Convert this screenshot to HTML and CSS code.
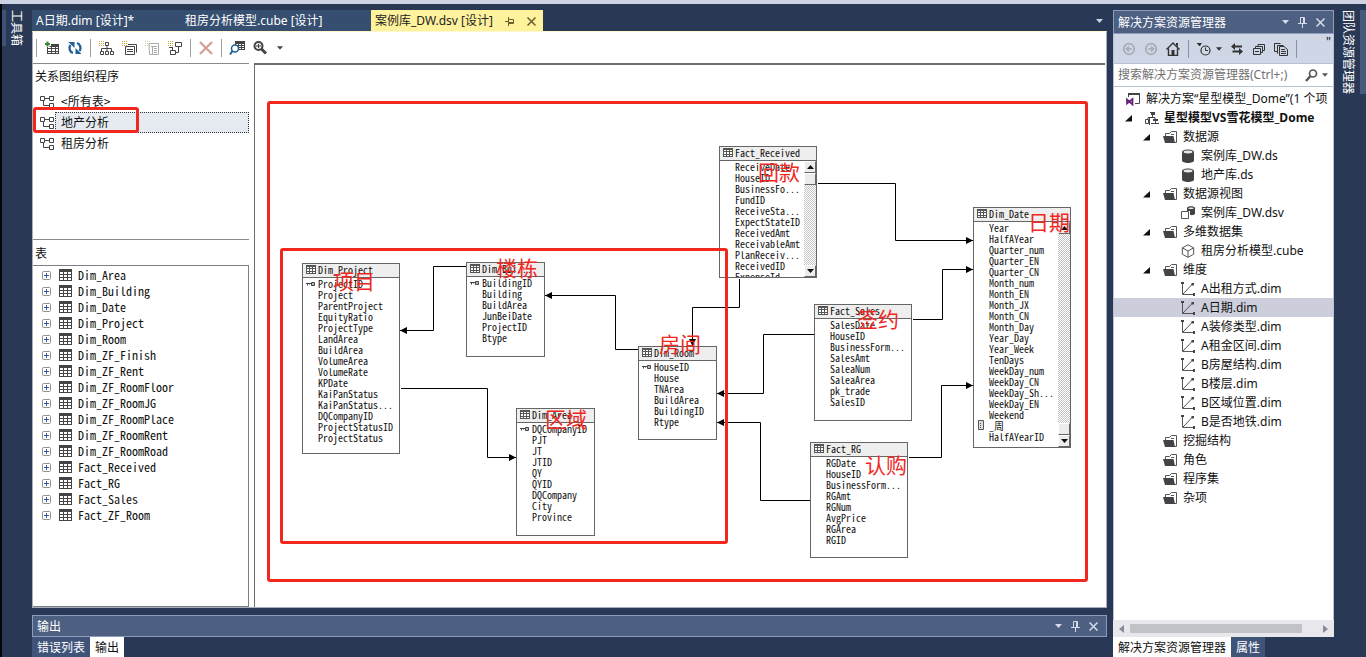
FILE: index.html
```html
<!DOCTYPE html>
<html lang="zh-CN">
<head>
<meta charset="utf-8">
<title>案例库_DW.dsv [设计]</title>
<link rel="stylesheet" href="styles.css">
</head>
<body>
<svg class="sprite" aria-hidden="true">
  <symbol id="i-table" viewBox="0 0 13 12"><path fill="#444" d="M0 0h13v12H0z"/><path fill="#fff" d="M1 3h3v2H1zM5 3h3v2H5zM9 3h3v2H9zM1 6h3v2H1zM5 6h3v2H5zM9 6h3v2H9zM1 9h3v2H1zM5 9h3v2H5zM9 9h3v2H9z"/></symbol>
  <symbol id="i-tablesm" viewBox="0 0 10 9"><path fill="#555" d="M0 0h10v9H0z"/><path fill="#fff" d="M1 2h2v1H1zM4 2h2v1H4zM7 2h2v1H7zM1 4h2v2H1zM4 4h2v2H4zM7 4h2v2H7zM1 7h2v1H1zM4 7h2v1H4zM7 7h2v1H7z"/></symbol>
  <symbol id="i-key" viewBox="0 0 9 6"><path fill="none" stroke="#444" d="M0 2.500h5M1.500 2.500v2M3.500 2.500v1"/><path fill="#bbb" stroke="#444" d="M5.500 1.500h3v3h-3z"/></symbol>
  <symbol id="i-calc" viewBox="0 0 6 10"><path fill="#ddd" stroke="#555" d="M.5.5h5v9h-5z"/><path stroke="#555" stroke-dasharray="1 1" d="M2 3.500h2M2 5.500h2M2 7.500h2"/></symbol>
  <symbol id="i-plus" viewBox="0 0 9 9"><rect x=".5" y=".5" width="8" height="8" rx="1" fill="#fff" stroke="#919191"/><path stroke="#3a56a5" d="M2 4.500h5M4.500 2v5"/></symbol>
  <symbol id="i-diagram" viewBox="0 0 15 13"><path fill="none" stroke="#444" d="M.5 1.500h4v4h-4zM9.500 1.500h4v4h-4zM9.500 8.500h4v4h-4zM4.500 3.500h5M3.500 5.500v5h6"/></symbol>
  <symbol id="i-down" viewBox="0 0 7 4"><path fill="currentColor" d="M0 0h7L3.500 4z"/></symbol>
  <symbol id="i-pin" viewBox="0 0 9 11"><path fill="none" stroke="currentColor" d="M2.500 6V.5h4V6M5.500 1v5M0 6.500h9M4.500 7v4"/></symbol>
  <symbol id="i-pinside" viewBox="0 0 10 9"><path fill="none" stroke="currentColor" d="M4 2.500h4.500v4H4M4 5.500h4M3.500 0v9M0 4.500h3"/></symbol>
  <symbol id="i-close" viewBox="0 0 9 9"><path fill="none" stroke="currentColor" stroke-width="1.500" d="M.5.5l8 8M8.500.5l-8 8"/></symbol>
  <symbol id="i-folder" viewBox="0 0 14 14"><path fill="#fff" stroke="#555" d="M2.500 6V3.500h4l2-2h5v11H11"/><path stroke="#555" d="M8 4.500h3"/><path fill="#444" d="M0 6h10.500L12 13H2z"/></symbol>
  <symbol id="i-db" viewBox="0 0 14 14"><path fill="#424242" d="M1 3c0-3.500 12-3.500 12 0v8.500c0 3.300-12 3.300-12 0z"/><ellipse cx="7" cy="3" rx="4.500" ry="1.400" fill="#e8e8e8"/></symbol>
  <symbol id="i-dsv" viewBox="0 0 14 14"><path fill="none" stroke="#555" d="M.5 5.500h7v7h-7z"/><path fill="#424242" d="M6 2c0-2.500 8-2.500 8 0v5.500c0 2-5 2-5 1V5H6z"/><ellipse cx="10" cy="2.300" rx="2.800" ry=".8" fill="#fff"/></symbol>
  <symbol id="i-cube" viewBox="0 0 14 14"><path fill="none" stroke="#555" d="M7 .8l5.700 3v6.400L7 13.300l-5.700-3.100V3.800zM1.300 3.800L7 7l5.700-3.200M7 7v6.300"/></symbol>
  <symbol id="i-dim" viewBox="0 0 14 14"><path fill="none" stroke="#555" d="M1.500 1v11.500H12M2 12L11.500 2"/><path fill="#444" d="M0 0h3v2H0zM10.500 1h2.500v2.500h-2.500zM12 11h2v3h-2z"/></symbol>
  <symbol id="i-project" viewBox="0 0 14 14"><path fill="none" stroke="#444" d="M5 1.500h5M7.500 2v4M3 8V6.500h7V8M.5 8.500h3v4h-3zM4.500 7v7M6 12.500h8M10.500 8v5"/><path fill="#444" d="M6 1h4v3H6zM8 8h5v2H8z"/></symbol>
  <symbol id="i-solution" viewBox="0 0 14 14"><path fill="none" stroke="#444" d="M2.500 5V1.500h11v10H9"/><path fill="#444" d="M2 1h12v2H2z"/><path fill="none" stroke="#68217a" stroke-width="1.700" d="M1 7.500v4l5.500-4.500v5.500z"/></symbol>
  <symbol id="i-twisty" viewBox="0 0 7 7"><path fill="#111" d="M7 0v6.500H0z"/></symbol>
  <symbol id="i-addtable" viewBox="0 0 16 16"><path fill="#444" d="M3 4h12v10H3z"/><path fill="#fff" d="M4 7h3v1H4zM8 7h3v1H8zM12 7h2v1h-2zM4 9h3v2H4zM8 9h3v2H8zM12 9h2v2h-2zM4 12h3v1H4zM8 12h3v1H8zM12 12h2v1h-2z"/><path stroke="#fff" stroke-width="4" d="M0 4h7M3.500 1v6"/><path stroke="#388a34" stroke-width="2" d="M1 4h5M3.500 1.500v5"/></symbol>
  <symbol id="i-refresh" viewBox="0 0 16 16"><path fill="none" stroke="#1f6096" stroke-width="2.300" d="M6 13A5.200 5.200 0 0 1 3.500 5M10 3a5.200 5.200 0 0 1 2.500 8"/><path fill="#1f6096" d="M1.500 2h6v6zM14.500 14h-6V8z"/></symbol>
  <symbol id="i-tree" viewBox="0 0 16 16"><path stroke="#c9a03c" stroke-dasharray="1 1" d="M1 1.500h5M1 3.500h5M1 5.500h5"/><path fill="none" stroke="#444" d="M7.500 2.500h3v3h-3zM9 6v3M3.500 11V8.500h10V11M2.500 11.500h3v3h-3zM7.500 11.500h3v3h-3zM12.500 11.500h3v3h-3zM9 9v2"/></symbol>
  <symbol id="i-calcnew" viewBox="0 0 16 16"><path stroke="#c9a03c" stroke-dasharray="1 1" d="M1 1.500h5M1 3.500h5M1 5.500h5"/><path fill="none" stroke="#444" d="M7 4.500h8.500v8M4.500 6.500h9v8h-9zM6 9.500h6M6 11.500h6"/></symbol>
  <symbol id="i-copyoff" viewBox="0 0 16 16"><path stroke="#d8cba8" stroke-dasharray="1 1" d="M1 1.500h5M1 3.500h5M1 5.500h5"/><path fill="none" stroke="#aaa" d="M5 3.500h9.500v11h-9zM8.500 6v8M7 6.500h6M10 8.500h3M10 10.500h3M10 12.500h3"/></symbol>
  <symbol id="i-relnew" viewBox="0 0 16 16"><path stroke="#c9a03c" stroke-dasharray="1 1" d="M1 1.500h5M1 3.500h5M1 5.500h5"/><path fill="none" stroke="#444" d="M8.500 2.500h6v4h-6zM3.500 10.500h5v4h-5zM5.500 10V8M8.500 12.500h3V7M2 7.500h4"/></symbol>
  <symbol id="i-delete" viewBox="0 0 16 16"><path stroke="#d2a29a" stroke-width="2.400" d="M2 2l12 12M14 2L2 14"/></symbol>
  <symbol id="i-findtable" viewBox="0 0 16 16"><path fill="#444" d="M6 1h10v9H6z"/><path fill="#fff" d="M7 4h2v1H7zM10 4h2v1h-2zM13 4h2v1h-2zM7 6h2v1H7zM10 6h2v1h-2zM13 6h2v1h-2zM10 8h2v1h-2zM13 8h2v1h-2z"/><circle cx="6" cy="8.500" r="3.500" fill="#fff" stroke="#1f6096" stroke-width="1.500"/><path stroke="#1f6096" stroke-width="2" d="M3.500 11L1 14.500"/></symbol>
  <symbol id="i-zoom" viewBox="0 0 16 16"><circle cx="6.500" cy="6" r="4" fill="#eee" stroke="#444" stroke-width="2"/><path stroke="#444" d="M4 6h5M6.500 4v4"/><path stroke="#444" stroke-width="3" d="M9.500 9l4.500 4.500"/></symbol>
  <symbol id="i-back" viewBox="0 0 14 14"><circle cx="7" cy="7" r="5.300" fill="none" stroke="#a6aab3" stroke-width="1.700"/><path fill="none" stroke="#a6aab3" stroke-width="1.500" d="M10 7H4.500M7 4.500L4.500 7 7 9.500"/></symbol>
  <symbol id="i-forward" viewBox="0 0 14 14"><circle cx="7" cy="7" r="5.300" fill="none" stroke="#a6aab3" stroke-width="1.700"/><path fill="none" stroke="#a6aab3" stroke-width="1.500" d="M4 7h5.500M7 4.500L9.500 7 7 9.500"/></symbol>
  <symbol id="i-home" viewBox="0 0 14 14"><path fill="none" stroke="#333" stroke-width="1.400" d="M.5 7.500L7 1l6.500 6.500M2.500 6.500v7h9v-7"/><path fill="#333" d="M5.500 8h3v5.500h-3zM10 1h2v4l-2-2z"/></symbol>
  <symbol id="i-clock" viewBox="0 0 14 14"><circle cx="8.500" cy="8.500" r="4.500" fill="none" stroke="#333" stroke-width="1.200"/><path fill="none" stroke="#333" d="M8.500 5.500v3h2.500M0 1.500h4"/><path fill="#333" d="M0 1h5L3 4H2z"/></symbol>
  <symbol id="i-sync" viewBox="0 0 14 14"><path fill="none" stroke="#333" stroke-width="1.800" d="M3 4.500h9M11 9.500H2.500"/><path fill="#333" d="M5 1v7L1 4.500zM9 6v7l4-3.500z"/></symbol>
  <symbol id="i-collapse" viewBox="0 0 14 14"><path fill="none" stroke="#333" d="M1.500 6.500h7v6h-7zM3 9.500h4M3.500 6V4.500h7v6H9M6 4V2.500h6.500v6H11"/></symbol>
  <symbol id="i-showall" viewBox="0 0 14 14"><path fill="none" stroke="#333" d="M3 9.500H.5v-8h6M4 11.500H3.500v-8h6M5.500 4.500H10l3.500 3v6h-8zM7 7.500h4M7 9.500h5M7 11.500h5"/></symbol>
  <symbol id="i-search" viewBox="0 0 13 13"><circle cx="8" cy="4.500" r="3.500" fill="none" stroke="#555" stroke-width="1.700"/><path stroke="#555" stroke-width="2.400" d="M5.500 7L1 12"/></symbol>
  <symbol id="i-left" viewBox="0 0 5 8"><path fill="#868999" d="M5 0v8L0 4z"/></symbol>
  <symbol id="i-right" viewBox="0 0 5 8"><path fill="#868999" d="M0 0v8l5-4z"/></symbol>
</svg>

<div class="app">
  <div class="topstrip"></div>
  <div class="shell">
    <aside class="rail rail-left"><button class="rail-tab">工具箱</button></aside>

    <main class="center">
      <nav class="tabs">
        <button class="tab tab-a">A日期.dim [设计]*</button>
        <button class="tab tab-b">租房分析模型.cube [设计]</button>
        <div class="tab active"><span>案例库_DW.dsv [设计]</span>
          <button class="icon-btn" aria-label="固定"><svg width="10" height="9"><use href="#i-pinside"/></svg></button>
          <button class="icon-btn" aria-label="关闭"><svg width="9" height="9"><use href="#i-close"/></svg></button></div>
        <button class="icon-btn tabs-more" aria-label="更多"><svg width="7" height="4"><use href="#i-down"/></svg></button>
      </nav>

      <section class="editor">
        <div class="toolbar">
          <i class="sep"></i>
          <button class="tool" aria-label="添加表"><svg><use href="#i-addtable"/></svg></button>
          <button class="tool" aria-label="刷新"><svg><use href="#i-refresh"/></svg></button>
          <i class="sep"></i>
          <button class="tool" aria-label="新建关系图"><svg><use href="#i-tree"/></svg></button>
          <button class="tool" aria-label="新建命名查询"><svg><use href="#i-calcnew"/></svg></button>
          <button class="tool" aria-label="新建命名计算"><svg><use href="#i-copyoff"/></svg></button>
          <button class="tool" aria-label="新建关系"><svg><use href="#i-relnew"/></svg></button>
          <i class="sep"></i>
          <button class="tool" aria-label="删除"><svg><use href="#i-delete"/></svg></button>
          <i class="sep"></i>
          <button class="tool" aria-label="查找表"><svg><use href="#i-findtable"/></svg></button>
          <button class="tool" aria-label="缩放"><svg><use href="#i-zoom"/></svg></button>
          <button class="tool tool-arrow" aria-label="缩放选项"><svg><use href="#i-down"/></svg></button>
        </div>

        <div class="panes">
          <div class="sidepane">
            <section class="organizer">
              <h2>关系图组织程序</h2>
              <ul>
                <li><svg><use href="#i-diagram"/></svg><span>&lt;所有表&gt;</span></li>
                <li class="picked"><svg><use href="#i-diagram"/></svg><span>地产分析</span><i class="mark"></i></li>
                <li><svg><use href="#i-diagram"/></svg><span>租房分析</span></li>
              </ul>
            </section>
            <section class="tables">
              <h2>表</h2>
              <ul>
                <li><svg class="px"><use href="#i-plus"/></svg><svg class="tb"><use href="#i-table"/></svg>Dim_Area</li>
                <li><svg class="px"><use href="#i-plus"/></svg><svg class="tb"><use href="#i-table"/></svg>Dim_Building</li>
                <li><svg class="px"><use href="#i-plus"/></svg><svg class="tb"><use href="#i-table"/></svg>Dim_Date</li>
                <li><svg class="px"><use href="#i-plus"/></svg><svg class="tb"><use href="#i-table"/></svg>Dim_Project</li>
                <li><svg class="px"><use href="#i-plus"/></svg><svg class="tb"><use href="#i-table"/></svg>Dim_Room</li>
                <li><svg class="px"><use href="#i-plus"/></svg><svg class="tb"><use href="#i-table"/></svg>Dim_ZF_Finish</li>
                <li><svg class="px"><use href="#i-plus"/></svg><svg class="tb"><use href="#i-table"/></svg>Dim_ZF_Rent</li>
                <li><svg class="px"><use href="#i-plus"/></svg><svg class="tb"><use href="#i-table"/></svg>Dim_ZF_RoomFloor</li>
                <li><svg class="px"><use href="#i-plus"/></svg><svg class="tb"><use href="#i-table"/></svg>Dim_ZF_RoomJG</li>
                <li><svg class="px"><use href="#i-plus"/></svg><svg class="tb"><use href="#i-table"/></svg>Dim_ZF_RoomPlace</li>
                <li><svg class="px"><use href="#i-plus"/></svg><svg class="tb"><use href="#i-table"/></svg>Dim_ZF_RoomRent</li>
                <li><svg class="px"><use href="#i-plus"/></svg><svg class="tb"><use href="#i-table"/></svg>Dim_ZF_RoomRoad</li>
                <li><svg class="px"><use href="#i-plus"/></svg><svg class="tb"><use href="#i-table"/></svg>Fact_Received</li>
                <li><svg class="px"><use href="#i-plus"/></svg><svg class="tb"><use href="#i-table"/></svg>Fact_RG</li>
                <li><svg class="px"><use href="#i-plus"/></svg><svg class="tb"><use href="#i-table"/></svg>Fact_Sales</li>
                <li><svg class="px"><use href="#i-plus"/></svg><svg class="tb"><use href="#i-table"/></svg>Fact_ZF_Room</li>
              </ul>
            </section>
          </div>

          <div class="canvas">
            <svg class="links" aria-hidden="true">
              <defs><marker id="arrow" viewBox="0 0 6 6" refX="6" refY="3" markerWidth="7" markerHeight="7" markerUnits="userSpaceOnUse" orient="auto"><path d="M0 0l6 3-6 3z"/></marker></defs>
              <g transform="translate(-255 -65)" fill="none" stroke="#000">
                <path marker-end="url(#arrow)" d="M466 266.500H433.500V330.500H400"/>
                <path marker-end="url(#arrow)" d="M401 388.500H487.500V457.500H516"/>
                <path marker-end="url(#arrow)" d="M638 349.500H615.500V295.500H545"/>
                <path marker-end="url(#arrow)" d="M739.500 279V307.500H692.500V346"/>
                <path marker-end="url(#arrow)" d="M818 183.500H895.500V240.500H973"/>
                <path marker-end="url(#arrow)" d="M913 319.500H942.500V269.500H973"/>
                <path marker-end="url(#arrow)" d="M814 334.500H763.500V393.500H717"/>
                <path marker-end="url(#arrow)" d="M909 457.500H941.500V385.500H973"/>
                <path marker-end="url(#arrow)" d="M810 500.500H760.500V422.500H717"/>
              </g>
            </svg>

            <article class="node n-project"><h3><svg><use href="#i-tablesm"/></svg>Dim_Project</h3>
              <ul><li><svg class="key"><use href="#i-key"/></svg>ProjectID</li><li>Project</li><li>ParentProject</li><li>EquityRatio</li><li>ProjectType</li><li>LandArea</li><li>BuildArea</li><li>VolumeArea</li><li>VolumeRate</li><li>KPDate</li><li>KaiPanStatus</li><li>KaiPanStatus...</li><li>DQCompanyID</li><li>ProjectStatusID</li><li>ProjectStatus</li></ul></article>
            <article class="node n-building"><h3><svg><use href="#i-tablesm"/></svg>Dim_Bui...</h3>
              <ul><li><svg class="key"><use href="#i-key"/></svg>BuildingID</li><li>Building</li><li>BuildArea</li><li>JunBeiDate</li><li>ProjectID</li><li>Btype</li></ul></article>
            <article class="node n-area"><h3><svg><use href="#i-tablesm"/></svg>Dim_Area</h3>
              <ul><li><svg class="key"><use href="#i-key"/></svg>DQCompanyID</li><li>PJT</li><li>JT</li><li>JTID</li><li>QY</li><li>QYID</li><li>DQCompany</li><li>City</li><li>Province</li></ul></article>
            <article class="node n-room"><h3><svg><use href="#i-tablesm"/></svg>Dim_Room</h3>
              <ul><li><svg class="key"><use href="#i-key"/></svg>HouseID</li><li>House</li><li>TNArea</li><li>BuildArea</li><li>BuildingID</li><li>Rtype</li></ul></article>
            <article class="node n-received"><h3><svg><use href="#i-tablesm"/></svg>Fact_Received</h3>
              <div class="body"><ul><li>ReceiveDate</li><li>HouseID</li><li>BusinessFo...</li><li>FundID</li><li>ReceiveSta...</li><li>ExpectStateID</li><li>ReceivedAmt</li><li>ReceivableAmt</li><li>PlanReceiv...</li><li>ReceivedID</li><li>ExpenseId</li></ul>
                <div class="vbar"><button aria-label="向上"><svg class="flip"><use href="#i-down"/></svg></button><i class="thumb"></i><i class="track"></i><button aria-label="向下"><svg><use href="#i-down"/></svg></button></div></div></article>
            <article class="node n-sales"><h3><svg><use href="#i-tablesm"/></svg>Fact_Sales</h3>
              <ul><li>SalesDate</li><li>HouseID</li><li>BusinessForm...</li><li>SalesAmt</li><li>SaleaNum</li><li>SaleaArea</li><li>pk_trade</li><li>SalesID</li></ul></article>
            <article class="node n-rg"><h3><svg><use href="#i-tablesm"/></svg>Fact_RG</h3>
              <ul><li>RGDate</li><li>HouseID</li><li>BusinessForm...</li><li>RGAmt</li><li>RGNum</li><li>AvgPrice</li><li>RGArea</li><li>RGID</li></ul></article>
            <article class="node n-date"><h3><svg><use href="#i-tablesm"/></svg>Dim_Date</h3>
              <div class="body"><ul><li>Year</li><li>HalfAYear</li><li>Quarter_num</li><li>Quarter_EN</li><li>Quarter_CN</li><li>Month_num</li><li>Month_EN</li><li>Month_JX</li><li>Month_CN</li><li>Month_Day</li><li>Year_Day</li><li>Year_Week</li><li>TenDays</li><li>WeekDay_num</li><li>WeekDay_CN</li><li>WeekDay_Sh...</li><li>WeekDay_EN</li><li>Weekend</li><li><svg class="calc"><use href="#i-calc"/></svg>_周</li><li>HalfAYearID</li></ul>
                <div class="vbar"><button aria-label="向上"><svg class="flip"><use href="#i-down"/></svg></button><i class="track"></i><i class="thumb"></i><button aria-label="向下"><svg><use href="#i-down"/></svg></button></div></div></article>

            <i class="frame frame-outer"></i>
            <i class="frame frame-inner"></i>
            <b class="note t-project">项目</b>
            <b class="note t-building">楼栋</b>
            <b class="note t-room">房间</b>
            <b class="note t-area">区域</b>
            <b class="note t-received">回款</b>
            <b class="note t-sales">签约</b>
            <b class="note t-rg">认购</b>
            <b class="note t-date">日期</b>
          </div>
        </div>
      </section>

      <section class="output">
        <header class="titlebar"><span>输出</span>
          <button class="icon-btn" aria-label="选项"><svg width="7" height="4"><use href="#i-down"/></svg></button>
          <button class="icon-btn" aria-label="自动隐藏"><svg width="9" height="11"><use href="#i-pin"/></svg></button>
          <button class="icon-btn" aria-label="关闭"><svg width="9" height="9"><use href="#i-close"/></svg></button></header>
        <nav class="dock"><button>错误列表</button><button class="on">输出</button></nav>
      </section>
    </main>

    <aside class="explorer">
      <header class="titlebar"><span>解决方案资源管理器</span>
        <button class="icon-btn" aria-label="选项"><svg width="7" height="4"><use href="#i-down"/></svg></button>
        <button class="icon-btn" aria-label="自动隐藏"><svg width="9" height="11"><use href="#i-pin"/></svg></button>
        <button class="icon-btn" aria-label="关闭"><svg width="9" height="9"><use href="#i-close"/></svg></button></header>
      <div class="ex-tools">
        <button aria-label="后退"><svg><use href="#i-back"/></svg></button>
        <button aria-label="前进"><svg><use href="#i-forward"/></svg></button>
        <button aria-label="主页"><svg><use href="#i-home"/></svg></button>
        <i class="sep"></i>
        <button class="timed" aria-label="筛选"><svg><use href="#i-clock"/></svg><svg class="mini"><use href="#i-down"/></svg></button>
        <button aria-label="同步"><svg><use href="#i-sync"/></svg></button>
        <button aria-label="折叠"><svg><use href="#i-collapse"/></svg></button>
        <button aria-label="显示所有文件"><svg><use href="#i-showall"/></svg></button>
        <i class="sep"></i>
        <span class="overflow">"</span>
      </div>
      <label class="search"><input type="text" aria-label="搜索" placeholder="搜索解决方案资源管理器(Ctrl+;)"><svg width="13" height="13"><use href="#i-search"/></svg><svg width="6" height="4"><use href="#i-down"/></svg></label>
      <ul class="tree">
        <li><svg><use href="#i-solution"/></svg>解决方案“星型模型_Dome”(1 个项</li>
        <li class="l1"><svg class="tw"><use href="#i-twisty"/></svg><svg><use href="#i-project"/></svg><strong>星型模型VS雪花模型_Dome</strong></li>
        <li class="l2"><svg class="tw"><use href="#i-twisty"/></svg><svg><use href="#i-folder"/></svg>数据源</li>
        <li class="l3"><svg><use href="#i-db"/></svg>案例库_DW.ds</li>
        <li class="l3"><svg><use href="#i-db"/></svg>地产库.ds</li>
        <li class="l2"><svg class="tw"><use href="#i-twisty"/></svg><svg><use href="#i-folder"/></svg>数据源视图</li>
        <li class="l3"><svg><use href="#i-dsv"/></svg>案例库_DW.dsv</li>
        <li class="l2"><svg class="tw"><use href="#i-twisty"/></svg><svg><use href="#i-folder"/></svg>多维数据集</li>
        <li class="l3"><svg><use href="#i-cube"/></svg>租房分析模型.cube</li>
        <li class="l2"><svg class="tw"><use href="#i-twisty"/></svg><svg><use href="#i-folder"/></svg>维度</li>
        <li class="l3"><svg><use href="#i-dim"/></svg>A出租方式.dim</li>
        <li class="l3 sel"><svg><use href="#i-dim"/></svg>A日期.dim</li>
        <li class="l3"><svg><use href="#i-dim"/></svg>A装修类型.dim</li>
        <li class="l3"><svg><use href="#i-dim"/></svg>A租金区间.dim</li>
        <li class="l3"><svg><use href="#i-dim"/></svg>B房屋结构.dim</li>
        <li class="l3"><svg><use href="#i-dim"/></svg>B楼层.dim</li>
        <li class="l3"><svg><use href="#i-dim"/></svg>B区域位置.dim</li>
        <li class="l3"><svg><use href="#i-dim"/></svg>B是否地铁.dim</li>
        <li class="l2 leaf"><svg><use href="#i-folder"/></svg>挖掘结构</li>
        <li class="l2 leaf"><svg><use href="#i-folder"/></svg>角色</li>
        <li class="l2 leaf"><svg><use href="#i-folder"/></svg>程序集</li>
        <li class="l2 leaf"><svg><use href="#i-folder"/></svg>杂项</li>
      </ul>
      <div class="hbar"><svg width="5" height="8"><use href="#i-left"/></svg><i></i><svg width="5" height="8"><use href="#i-right"/></svg></div>
      <nav class="dock"><button class="on">解决方案资源管理器</button><button>属性</button></nav>
    </aside>

    <aside class="rail rail-right"><button class="rail-tab">团队资源管理器</button></aside>
  </div>
</div>
</body>
</html>
```
FILE: styles.css
```css
:root {
  --navy: #293955;
  --title: #4d6082;
  --edge: #8e9bbc;
  --red: #f0281e;
  --ui: "Noto Sans", "Noto Sans CJK SC", sans-serif;
  --mono: "Noto Sans Mono CJK SC", "Liberation Mono", "Noto Sans CJK SC", monospace;
}
* { box-sizing: border-box; }
body { margin: 0; background: var(--navy); font: 12px/16px var(--ui); color: #111; }
button { margin: 0; padding: 0; border: 0; background: none; color: inherit; font: inherit; white-space: nowrap; }
ul { list-style: none; margin: 0; padding: 0; }
h2, h3 { margin: 0; font-weight: 400; font-size: 12px; }
svg { display: block; flex: none; }
.sprite { position: absolute; width: 0; height: 0; }

.app { height: 100vh; display: flex; flex-direction: column; overflow: hidden; }
.topstrip { height: 4px; flex: none; background: #cdd3e3; }
.shell { flex: 1; min-height: 0; display: flex; }

.rail { flex: none; width: 32px; padding-top: 6px; color: #fff; }
.rail-left { border-left: 2px solid #05070d; }
.rail-left .rail-tab { border-left: 4px solid #3d5277; padding-left: 2px; }
.rail-right { display: flex; justify-content: flex-end; align-items: flex-start; }
.rail-right .rail-tab { border-right: 6px solid #465a7d; padding-right: 4px; }
.rail-tab { writing-mode: vertical-rl; text-orientation: sideways; line-height: 16px; }

.center { flex: 1; min-width: 0; display: flex; flex-direction: column; }
.tabs { display: flex; flex: none; height: 27px; padding-top: 6px; color: #fff; }
.tab { padding: 1px 4px 0; line-height: 20px; text-align: left; background: #364e6f; }
.tab-a { width: 149px; }
.tab-b { width: 190px; }
.tab.active { display: flex; align-items: center; background: #fff29d; color: #222; padding-right: 7px; gap: 12px; }
.tab.active .icon-btn { color: #6b5c2c; }
.icon-btn { display: flex; align-items: center; }
.tabs-more { margin-left: auto; margin-right: 4px; color: #ced4e3; }

.editor { flex: 1; min-height: 0; display: flex; flex-direction: column; background: #fff; border: 1px solid #a6adbd; border-top: 1px solid #fff8cf; }
.toolbar { flex: none; height: 31px; display: flex; align-items: center; gap: 7px; padding-left: 3px; }
.toolbar .sep { width: 1px; height: 18px; background: #a0a0a0; }
.tool svg { width: 16px; height: 16px; }
.tool-arrow { color: #444; padding-left: 2px; }
.tool-arrow svg { width: 6px; height: 4px; }

.panes { flex: 1; min-height: 0; display: flex; gap: 5px; }
.sidepane { flex: none; width: 216px; display: grid; grid-template-rows: 176px 1fr; font-family: "Noto Sans CJK SC", sans-serif; }
.organizer { border-top: 1px solid #8a8a8a; }
.organizer h2 { height: 27px; padding-left: 2px; line-height: 24px; }
.organizer li { display: flex; align-items: center; height: 21px; padding-left: 7px; position: relative; }
.organizer li svg { width: 15px; height: 13px; }
.organizer li span { flex: 1; padding-left: 5px; line-height: 18px; height: 21px; border: 1px solid transparent; }
.organizer .picked span { background: #e6ebf2; border: 1px dotted #333; }
.mark { position: absolute; left: 0; top: -5px; width: 106px; height: 26px; border: 3px solid var(--red); border-radius: 3px; }
.tables { display: flex; flex-direction: column; border-top: 1px solid #8a8a8a; }
.tables h2 { height: 25px; flex: none; padding-left: 2px; line-height: 25px; }
.tables ul { flex: 1; padding-top: 1px; border: 1px solid #7d8087; border-left: 0; font-family: var(--mono); }
.tables li { display: flex; align-items: center; height: 16px; padding-left: 9px; }
.px { width: 9px; height: 9px; margin-right: 8px; }
.tb { width: 13px; height: 12px; margin-right: 6px; }

.canvas { flex: 1; min-width: 0; position: relative; overflow: hidden; border: 1px solid #6d6d6d; border-width: 2px 0 0 1px; margin-right: 1px; }
.links { position: absolute; inset: 0; width: 100%; height: 100%; }
.node { position: absolute; width: 98px; display: flex; flex-direction: column; overflow: hidden; background: #fff; border: 1px solid #666; font: 10px/11px var(--mono); color: #111; }
.node h3 { flex: none; display: flex; align-items: center; gap: 2px; height: 14px; padding: 0 0 2px 3px; font-size: 10px; background: #eee; border-bottom: 1px solid #666; }
.node h3 svg { width: 10px; height: 9px; }
.node ul { flex: 1; }
.node li { position: relative; height: 11px; padding-left: 15px; white-space: nowrap; }
.key, .calc { position: absolute; top: 3px; left: 3px; width: 9px; height: 6px; }
.calc { top: 0; left: 4px; width: 6px; height: 10px; }
.body { display: flex; flex: 1; min-height: 0; }
.vbar { flex: none; width: 12px; display: flex; flex-direction: column; }
.vbar button, .thumb { height: 12px; display: flex; align-items: center; justify-content: center; background: #ececec; border: 1px solid #fff; border-right-color: #666; border-bottom-color: #666; }
.vbar svg { width: 7px; height: 4px; }
.flip { transform: rotate(180deg); }
.track { flex: 1; background: repeating-conic-gradient(#c4c4c4 0 25%, #fff 0 50%) 0 0 / 2px 2px; }
.n-project { left: 47px; top: 198px; height: 191px; }
.n-building { left: 211px; top: 197px; width: 79px; height: 95px; }
.n-area { left: 261px; top: 343px; width: 79px; height: 128px; }
.n-room { left: 383px; top: 281px; width: 79px; height: 94px; }
.n-received { left: 464px; top: 81px; height: 132px; }
.n-sales { left: 559px; top: 239px; height: 117px; }
.n-rg { left: 555px; top: 377px; height: 116px; }
.n-date { left: 718px; top: 142px; height: 241px; }

.frame { position: absolute; border: 3px solid var(--red); border-radius: 3px; }
.frame-outer { left: 12px; top: 36px; width: 821px; height: 481px; }
.frame-inner { left: 25px; top: 183px; width: 448px; height: 296px; }
.note { position: absolute; font: 400 21px/30px "Noto Sans CJK SC", sans-serif; color: var(--red); }
.t-project { left: 78px; top: 200px; }
.t-building { left: 241px; top: 187px; }
.t-room { left: 404px; top: 263px; }
.t-area { left: 290px; top: 338px; }
.t-received { left: 503px; top: 91px; }
.t-sales { left: 602px; top: 238px; }
.t-rg { left: 610px; top: 384px; }
.t-date { left: 773px; top: 141px; }

.output { flex: none; margin-top: 7px; }
.titlebar { display: flex; align-items: center; gap: 9px; height: 22px; padding: 0 8px 0 4px; background: var(--title); border: 1px solid var(--edge); color: #fff; }
.titlebar span { flex: 1; padding-top: 2px; }
.titlebar .icon-btn { color: #d6dcea; }
.dock { display: flex; height: 20px; flex: none; color: #fff; }
.dock button { padding: 1px 5px 0; line-height: 19px; background: #40547a; }
.dock .on { background: #fff; color: #111; }

.explorer { flex: none; width: 221px; margin: 6px 0 0 6px; display: flex; flex-direction: column; }
.explorer .titlebar { height: 24px; flex: none; }
.ex-tools { flex: none; display: flex; align-items: center; gap: 8px; height: 29px; padding: 0 2px 0 8px; background: #cfd6e5; border: 1px solid #b8c1d6; border-width: 0 1px; }
.ex-tools svg { width: 14px; height: 14px; }
.ex-tools .mini { width: 6px; height: 4px; }
.ex-tools .sep { width: 1px; height: 18px; background: #8591ab; }
.timed { display: flex; align-items: center; gap: 5px; color: #333; }
.overflow { margin-left: auto; align-self: flex-start; }
.search { flex: none; display: flex; align-items: center; gap: 4px; height: 24px; padding: 0 5px 0 4px; background: #fff; border: 1px solid #b8c1d6; color: #555; }
.search input { flex: 1; min-width: 0; padding: 0; border: 0; outline: 0; background: none; font: inherit; }
.search input::placeholder { color: #717171; opacity: 1; }
.tree { flex: 1; min-height: 0; overflow: hidden; padding-top: 2px; background: #fff; border: 1px solid #b8c1d6; border-width: 0 1px; }
.tree li { display: flex; align-items: center; gap: 6px; height: 19px; padding: 1px 0 0 12px; white-space: nowrap; }
.tree svg { width: 14px; height: 14px; }
.tree .tw { width: 7px; height: 7px; }
.tree li.l1 { padding-left: 11px; gap: 5px; }
.tree .l1 .tw { margin-right: 8px; }
.tree li.l2 { padding-left: 29px; gap: 6px; }
.tree .l2 .tw { margin-right: 7px; }
.tree li.leaf { padding-left: 49px; }
.tree li.l3 { padding-left: 67px; }
.tree .sel { background: #cccedb; }
.hbar { flex: none; display: flex; align-items: center; gap: 6px; height: 17px; padding: 0 6px; background: #e8e8ec; }
.hbar i { flex: 1; height: 9px; margin-right: 15px; background: #c2c3c9; }
```
